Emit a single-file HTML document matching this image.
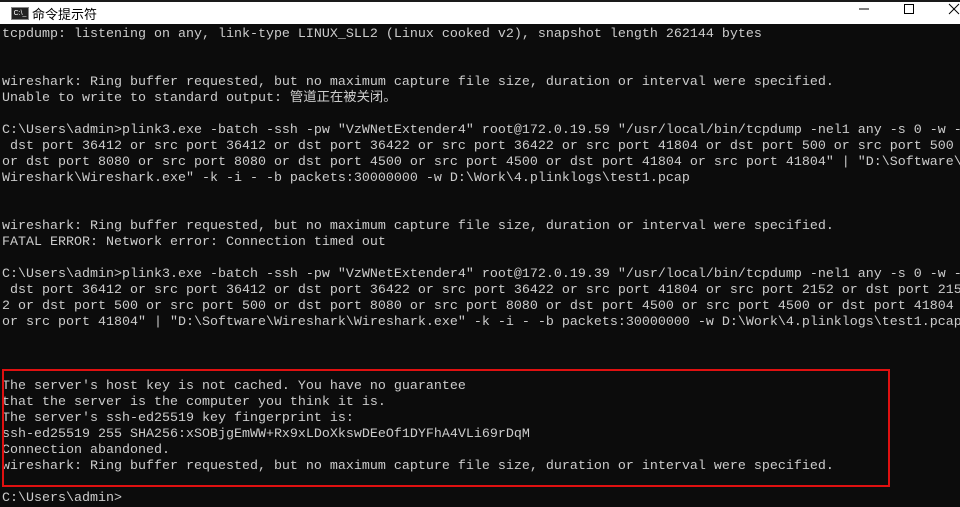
<html><head><style>
body{margin:0;width:960px;height:499px;overflow:hidden;background:#0c0c0c;position:relative}
#top{position:absolute;left:0;top:0;width:960px;height:2px;background:#1a1a1a}
#tb{position:absolute;left:0;top:2px;width:960px;height:22px;background:#fff}
#ic{position:absolute;left:11px;top:5px;width:16px;height:11px;background:#222;border:1px solid #888;color:#fff;font:7px "Liberation Sans",sans-serif;line-height:11px;text-align:center}
#tt{position:absolute;left:32px;top:2px;font:13px "Liberation Sans","Noto Sans CJK SC",sans-serif;color:#000}
#con{position:absolute;left:2px;top:27px;font-family:"Liberation Mono","Noto Sans CJK SC",monospace;font-size:13.33px;line-height:16px;color:#cccccc;white-space:pre;letter-spacing:0}
#box{position:absolute;left:2px;top:369px;width:884px;height:114px;border:2px solid #e01010}
</style></head><body>
<div id="top"></div>
<div id="tb"><div id="ic">C:\_</div><div id="tt">命令提示符</div>
<svg style="position:absolute;left:856px;top:0" width="104" height="22"><line x1="3" y1="7" x2="13" y2="7" stroke="#000"/><rect x="48.5" y="2.5" width="9" height="9" fill="none" stroke="#000"/><line x1="93" y1="2" x2="103" y2="12" stroke="#000"/><line x1="103" y1="2" x2="93" y2="12" stroke="#000"/></svg></div>
<div id="con">tcpdump: listening on any, link-type LINUX_SLL2 (Linux cooked v2), snapshot length 262144 bytes


wireshark: Ring buffer requested, but no maximum capture file size, duration or interval were specified.
Unable to write to standard output: 管道正在被关闭。

C:\Users\admin>plink3.exe -batch -ssh -pw "VzWNetExtender4" root@172.0.19.59 "/usr/local/bin/tcpdump -nel1 any -s 0 -w -
 dst port 36412 or src port 36412 or dst port 36422 or src port 36422 or src port 41804 or dst port 500 or src port 500
or dst port 8080 or src port 8080 or dst port 4500 or src port 4500 or dst port 41804 or src port 41804" | "D:\Software\
Wireshark\Wireshark.exe" -k -i - -b packets:30000000 -w D:\Work\4.plinklogs\test1.pcap


wireshark: Ring buffer requested, but no maximum capture file size, duration or interval were specified.
FATAL ERROR: Network error: Connection timed out

C:\Users\admin>plink3.exe -batch -ssh -pw "VzWNetExtender4" root@172.0.19.39 "/usr/local/bin/tcpdump -nel1 any -s 0 -w -
 dst port 36412 or src port 36412 or dst port 36422 or src port 36422 or src port 41804 or src port 2152 or dst port 215
2 or dst port 500 or src port 500 or dst port 8080 or src port 8080 or dst port 4500 or src port 4500 or dst port 41804
or src port 41804" | "D:\Software\Wireshark\Wireshark.exe" -k -i - -b packets:30000000 -w D:\Work\4.plinklogs\test1.pcap



The server's host key is not cached. You have no guarantee
that the server is the computer you think it is.
The server's ssh-ed25519 key fingerprint is:
ssh-ed25519 255 SHA256:xSOBjgEmWW+Rx9xLDoXkswDEeOf1DYFhA4VLi69rDqM
Connection abandoned.
wireshark: Ring buffer requested, but no maximum capture file size, duration or interval were specified.

C:\Users\admin></div>
<div id="box"></div>
</body></html>
